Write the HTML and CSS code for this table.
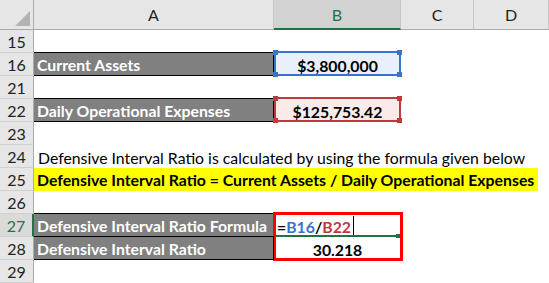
FILE: index.html
```html
<!DOCTYPE html>
<html>
<head>
<meta charset="utf-8">
<link rel="stylesheet" href="styles.css">
</head>
<body>
<div class="sheet">
  <div class="corner"><span class="tri"></span></div>
  <div class="colhead">A</div>
  <div class="colhead sel">B</div>
  <div class="colhead">C</div>
  <div class="colhead last">D</div>

  <div class="rowhead">15</div><div class="cell"></div><div class="cell"></div><div class="cell"></div><div class="cell"></div>

  <div class="rowhead">16</div>
  <div class="cell label">Current Assets</div>
  <div class="cell value ref-blue">$3,800,000<span class="hl blue"><i class="h tl"></i><i class="h tr"></i><i class="h bl"></i><i class="h br"></i></span></div>
  <div class="cell"></div><div class="cell"></div>

  <div class="rowhead">21</div><div class="cell"></div><div class="cell"></div><div class="cell"></div><div class="cell"></div>

  <div class="rowhead">22</div>
  <div class="cell label">Daily Operational Expenses</div>
  <div class="cell value ref-red">$125,753.42<span class="hl red"><i class="h tl"></i><i class="h tr"></i><i class="h bl"></i><i class="h br"></i></span></div>
  <div class="cell"></div><div class="cell"></div>

  <div class="rowhead">23</div><div class="cell"></div><div class="cell"></div><div class="cell"></div><div class="cell"></div>

  <div class="rowhead">24</div>
  <div class="cell wide plain">Defensive Interval Ratio is calculated by using the formula given below</div>

  <div class="rowhead">25</div>
  <div class="cell wide"><span class="yellow">Defensive Interval Ratio = Current Assets / Daily Operational Expenses</span></div>

  <div class="rowhead">26</div><div class="cell"></div><div class="cell"></div><div class="cell"></div><div class="cell"></div>

  <div class="rowhead active">27</div>
  <div class="cell label">Defensive Interval Ratio Formula</div>
  <div class="result">
    <div class="formula"><span class="k">=</span><span class="rb">B16</span><span class="k">/</span><span class="rr">B22</span><span class="caret"></span><span class="activeline"></span></div>
    <div class="answer">30.218</div>
    <span class="redbox"></span>
  </div>
  <div class="cell"></div><div class="cell"></div>

  <div class="rowhead">28</div>
  <div class="cell label">Defensive Interval Ratio</div>
  <div class="cell"></div><div class="cell"></div>

  <div class="rowhead">29</div><div class="cell"></div><div class="cell"></div><div class="cell"></div><div class="cell"></div>
</div>
</body>
</html>
```

FILE: styles.css
```css
* { box-sizing: border-box; }
html, body { margin: 0; padding: 0; background: #fff; }
body {
  width: 549px;
  height: 283px;
  overflow: hidden;
  font-family: Lato, "Open Sans", sans-serif;
  font-size: 15.8px;
  color: #000;
}
.sheet {
  display: grid;
  grid-template-columns: 34px 240px 127px 73px 75px;
  grid-template-rows: 30px repeat(11, 23px);
}
.corner {
  background: #e6e6e6;
  border-right: 1px solid #ababab;
  border-bottom: 1px solid #ababab;
  position: relative;
}
.tri {
  position: absolute;
  right: 3px;
  bottom: 3px;
  width: 0;
  height: 0;
  border-left: 15px solid transparent;
  border-bottom: 15px solid #b3b3b3;
}
.colhead {
  background: #e6e6e6;
  border-right: 1px solid #c6c6c6;
  border-bottom: 1px solid #ababab;
  display: flex;
  align-items: flex-end;
  justify-content: center;
  padding-bottom: 5px;
  font-size: 16px;
  color: #222;
}
.colhead.sel {
  background: #d2d2d2;
  color: #217346;
  border-bottom: 2px solid #217346;
  padding-bottom: 4px;
}
.colhead.last { border-right: 1px solid #c6c6c6; }
.rowhead {
  background: #e6e6e6;
  border-right: 1px solid #ababab;
  border-bottom: 1px solid #d0d0d0;
  display: flex;
  align-items: center;
  justify-content: center;
  padding-top: 1px;
  font-size: 16px;
  color: #222;
}
.rowhead.active {
  color: #217346;
  border-right: 2px solid #217346;
  background: #dadada;
}
.cell {
  display: flex;
  align-items: center;
  padding: 1px 4px 0;
  white-space: nowrap;
  position: relative;
}
.label {
  background: #808080;
  color: #fff;
  font-weight: bold;
  border-bottom: 1px solid #000;
  border-right: 1px solid #000;
  box-shadow: 0 -1px 0 #000;
  padding-left: 3px;
}
.value {
  justify-content: center;
  font-weight: bold;
}
.ref-blue { background: #e9f0fa; }
.ref-red { background: #fbeaea; }
.hl {
  position: absolute;
  left: 0;
  right: 0;
  top: -2px;
  bottom: 0;
  border: 2px solid #3b73c8;
}
.hl.red { border-color: #c0393f; }
.h {
  position: absolute;
  width: 5px;
  height: 5px;
  background: #3b73c8;
}
.hl.red .h { background: #c0393f; }
.h.tl { left: -3px; top: -3px; }
.h.tr { right: -3px; top: -3px; }
.h.bl { left: -3px; bottom: -3px; }
.h.br { right: -3px; bottom: -3px; }
.wide {
  grid-column: 2 / 6;
  padding-left: 3px;
}
.wide.plain { padding-left: 4px; }
.yellow {
  display: flex;
  align-items: center;
  background: #ffff00;
  font-weight: bold;
  width: 504px;
  height: 23px;
  margin-left: -3px;
  padding-left: 3px;
  margin-top: -1px;
}
.result {
  grid-row: span 2;
  position: relative;
  display: grid;
  grid-template-rows: 23px 23px;
  font-weight: bold;
}
.formula {
  position: relative;
  display: flex;
  align-items: center;
  padding: 1px 0 0 3px;
}
.k { color: #000; }
.rb { color: #3b73c8; }
.rr { color: #c0393f; }
.caret {
  display: inline-block;
  width: 1px;
  height: 20px;
  background: #000;
  margin-left: 2px;
}
.activeline {
  position: absolute;
  left: 2px;
  right: 3px;
  bottom: 0;
  height: 2px;
  background: #217346;
}
.activeline::after {
  content: "";
  position: absolute;
  right: -2px;
  top: -1px;
  width: 4px;
  height: 4px;
  background: #217346;
}
.answer {
  display: flex;
  align-items: center;
  justify-content: center;
  padding-top: 1px;
}
.redbox {
  position: absolute;
  left: -1px;
  right: -2px;
  top: -2px;
  bottom: -1px;
  border: 3px solid #ff0000;
}
```
